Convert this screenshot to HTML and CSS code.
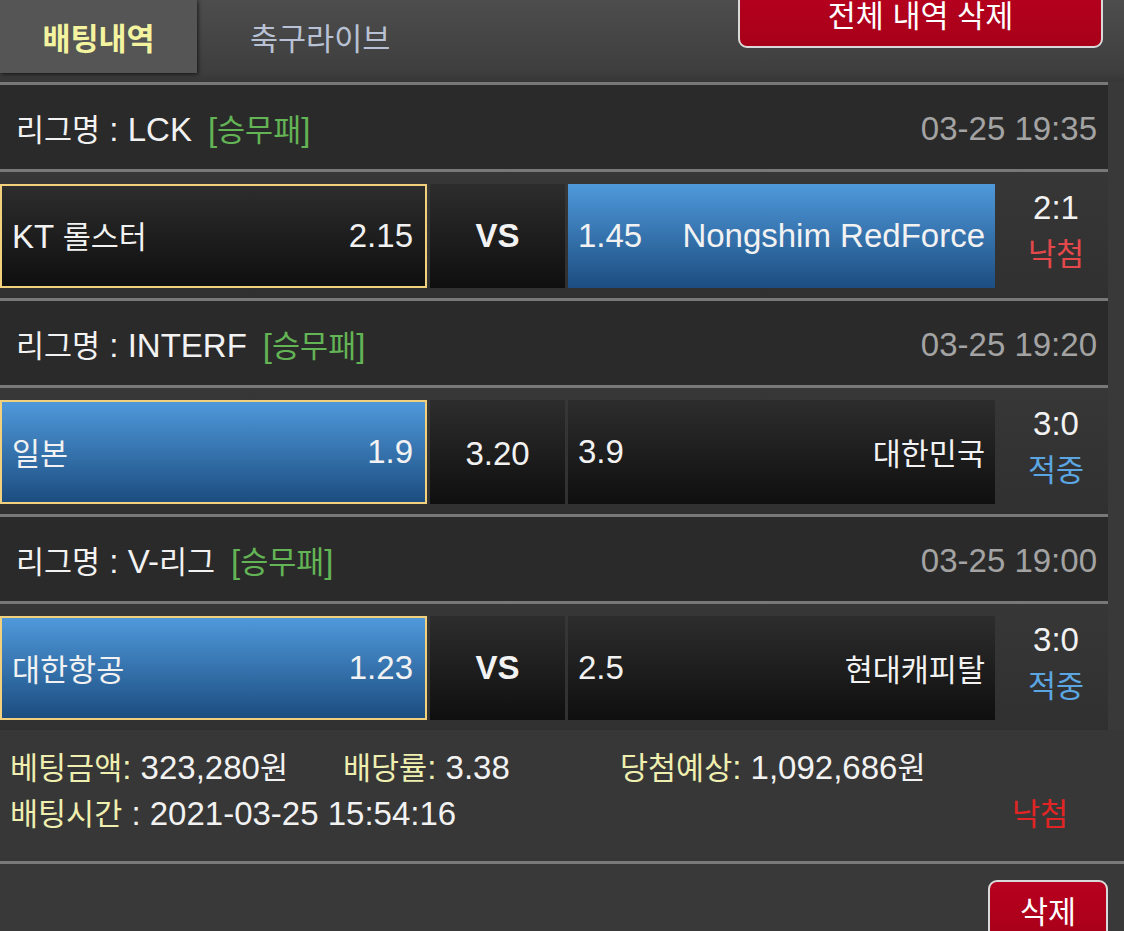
FILE: index.html
```html
<!DOCTYPE html>
<html lang="ko">
<head>
<meta charset="utf-8">
<title>배팅내역</title>
<link rel="stylesheet" href="styles.css">
</head>
<body>
<div class="topbar">
  <div class="tab active"><span class="k">배팅내역</span></div>
  <div class="tab tab2"><span class="k">축구라이브</span></div>
  <button class="btn-red btn-all"><span class="k">전체 내역 삭제</span></button>
</div>

<div class="list">
  <div class="line"></div>
  <div class="league">
    <div class="lname"><span class="k">리그명</span> : LCK<span class="type">[<span class="k">승무패</span>]</span></div>
    <div class="time">03-25 19:35</div>
  </div>
  <div class="line"></div>
  <div class="match">
    <div class="box home dark sel"><span>KT <span class="k">롤스터</span></span><span>2.15</span></div>
    <div class="box vs dark"><b>VS</b></div>
    <div class="box away blue"><span>1.45</span><span>Nongshim RedForce</span></div>
    <div class="result"><span>2:1</span><span class="k lose">낙첨</span></div>
  </div>

  <div class="line"></div>
  <div class="league">
    <div class="lname"><span class="k">리그명</span> : INTERF<span class="type">[<span class="k">승무패</span>]</span></div>
    <div class="time">03-25 19:20</div>
  </div>
  <div class="line"></div>
  <div class="match">
    <div class="box home blue sel"><span class="k">일본</span><span>1.9</span></div>
    <div class="box vs dark"><span class="draw">3.20</span></div>
    <div class="box away dark"><span>3.9</span><span class="k">대한민국</span></div>
    <div class="result"><span>3:0</span><span class="k win">적중</span></div>
  </div>

  <div class="line"></div>
  <div class="league">
    <div class="lname"><span class="k">리그명</span> : V-<span class="k">리그</span><span class="type">[<span class="k">승무패</span>]</span></div>
    <div class="time">03-25 19:00</div>
  </div>
  <div class="line"></div>
  <div class="match">
    <div class="box home blue sel"><span class="k">대한항공</span><span>1.23</span></div>
    <div class="box vs dark"><b>VS</b></div>
    <div class="box away dark"><span>2.5</span><span class="k">현대캐피탈</span></div>
    <div class="result"><span>3:0</span><span class="k win">적중</span></div>
  </div>
</div>

<div class="summary">
  <div class="srow">
    <div class="c1"><span class="lab"><span class="k">베팅금액</span>:</span> 323,280<span class="k">원</span></div>
    <div class="c2"><span class="lab"><span class="k">배당률</span>:</span> 3.38</div>
    <div class="c3"><span class="lab"><span class="k">당첨예상</span>:</span> 1,092,686<span class="k">원</span></div>
  </div>
  <div class="srow srow2">
    <div><span class="lab"><span class="k">배팅시간</span></span> : 2021-03-25 15:54:16</div>
    <div class="k red">낙첨</div>
  </div>
</div>
<div class="sline"></div>
<div class="footer">
  <button class="btn-red btn-del"><span class="k">삭제</span></button>
</div>
</body>
</html>
```

FILE: styles.css
```css
* {
  box-sizing: border-box;
  margin: 0;
  padding: 0;
}

html, body {
  background: #393939;
}

body {
  width: 1124px;
  height: 931px;
  overflow: hidden;
  font-family: "Liberation Sans", "Noto Sans CJK KR", sans-serif;
  font-size: 33px;
  color: #f2f2f2;
}

.k {
  font-family: "Noto Sans CJK KR", "Liberation Sans", sans-serif;
  font-size: 30.5px;
}

/* top bar */
.topbar {
  height: 82px;
  display: flex;
  align-items: flex-start;
  background: linear-gradient(#4d4d4d, #3e3e3e 88%, #363636);
}

.tab {
  width: 197px;
  height: 73px;
  display: flex;
  align-items: center;
  justify-content: center;
  line-height: 40px;
}

.tab.active {
  background: #555555;
  box-shadow: 1px 1px 4px rgba(0, 0, 0, 0.7);
  color: #f3f3a0;
  font-weight: bold;
}

.tab2 {
  justify-content: flex-start;
  padding-left: 53px;
  color: #b8c2d4;
}

.btn-red {
  border: 2px solid #d9d9d9;
  border-radius: 9px;
  background: linear-gradient(#b7001f, #a80019);
  color: #ffffff;
  display: flex;
  align-items: center;
  justify-content: center;
  line-height: 40px;
}

.btn-all {
  margin-left: auto;
  margin-right: 21px;
  margin-top: -18px;
  width: 365px;
  height: 66px;
  padding-bottom: 2px;
}

/* list */
.list {
  width: 1108px;
}

.line {
  height: 3px;
  background: #787878;
}

.league {
  height: 84px;
  background: #2a2a2a;
  display: flex;
  align-items: center;
  justify-content: space-between;
  padding: 4px 11px 0 16px;
  line-height: 40px;
}

.type {
  color: #63b455;
  margin-left: 16px;
}

.time {
  color: #a3a3a3;
}

.match {
  height: 126px;
  padding-top: 12px;
  display: flex;
  align-items: flex-start;
  background: linear-gradient(#373737, #303030);
}

.box {
  height: 104px;
  display: flex;
  align-items: center;
  justify-content: space-between;
  padding: 0 10px;
  line-height: 40px;
}

.home {
  width: 427px;
  padding: 0 12px 0 10px;
}

.away {
  width: 427px;
}

.vs {
  width: 135px;
  margin: 0 3px;
  justify-content: center;
}

.dark {
  background: linear-gradient(#2d2d2d, #0f0f0f);
}

.blue {
  background: linear-gradient(#4f99db, #1c4d80);
}

.sel {
  border: 2px solid #f2d07c;
}

.draw {
  padding-top: 4px;
}

.result {
  width: 113px;
  height: 104px;
  display: flex;
  flex-direction: column;
  align-items: center;
  justify-content: center;
  line-height: 45px;
  padding: 0 0 13px 9px;
}

.lose {
  color: #e5484b;
}

.win {
  color: #5ba6e2;
}

/* summary */
.summary {
  height: 131px;
  padding: 14px 56px 0 10px;
  line-height: 44px;
  background: #373737;
}

.srow {
  display: flex;
}

.c1 {
  width: 333px;
}

.c2 {
  width: 277px;
}

.lab {
  color: #efefb0;
}

.srow2 {
  justify-content: space-between;
}

.red {
  color: #e32424;
}

.sline {
  height: 3px;
  background: #7a7a7a;
}

.footer {
  display: flex;
  justify-content: flex-end;
  padding: 16px 16px 0 0;
}

.btn-del {
  width: 120px;
  height: 60px;
}
```
